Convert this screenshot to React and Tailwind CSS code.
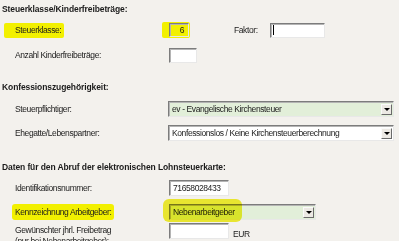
import React from "react";

const font = { fontFamily: '"Liberation Sans", Arial, sans-serif' };

const Sunken = ({ className, children }) => (
  <div
    className={
      "flex items-center border border-t-[#7c7c7c] border-l-[#7c7c7c] border-r-[#e8e8e8] border-b-[#e8e8e8] shadow-[inset_1px_1px_0_#b4b4b4] " +
      className
    }
  >
    {children}
  </div>
);

const Select = ({ className, value }) => (
  <Sunken className={"pl-[3px] pr-[1px] " + className}>
    <span className="flex-1 truncate">{value}</span>
    <span className="flex h-[11px] w-[11px] items-center justify-center border border-t-[#fafafa] border-l-[#fafafa] border-r-[#6a6a6a] border-b-[#6a6a6a] bg-[#ece9e4]">
      <span className="h-0 w-0 border-x-[3px] border-t-[3px] border-x-transparent border-t-black" />
    </span>
  </Sunken>
);

const Heading = ({ children, className }) => (
  <div className={"flex h-[16px] items-center pl-[2px] text-[8.5px] font-bold tracking-[-0.1px] " + className}>
    {children}
  </div>
);

export default function App() {
  return (
    <div
      style={font}
      className="relative h-[241px] w-[399px] overflow-hidden bg-[#f3f1ed] text-[8.5px] tracking-[-0.4px] text-[#1b1b1b]"
    >
      <Heading className="mt-[1px]">Steuerklasse/Kinderfreibeträge:</Heading>

      {/* Steuerklasse + Faktor */}
      <div className="mt-[5px] flex h-[16px] items-center">
        <div className="w-[162px] shrink-0 pl-[4px]">
          <span className="inline-flex h-[15px] items-center rounded-[2px] bg-[#f2f000] pl-[11px] pr-[3px]">
            Steuerklasse:
          </span>
        </div>
        <div className="flex h-[16px] items-center rounded-[2px] bg-[#f2f000] pl-[7px] pr-[1px]">
          <Sunken className="h-[14px] w-[20px] justify-end pr-[4px]">6</Sunken>
        </div>
        <span className="ml-[44px] w-[36px]">Faktor:</span>
        <Sunken className="h-[15px] w-[55px] bg-white pl-[2px]">
          <span className="h-[10px] w-[1px] bg-black" />
        </Sunken>
      </div>

      {/* Anzahl Kinderfreibeträge */}
      <div className="mt-[9px] flex h-[16px] items-center">
        <div className="w-[169px] shrink-0 pl-[15px]">Anzahl Kinderfreibeträge:</div>
        <Sunken className="h-[15px] w-[28px] bg-white" />
      </div>

      <Heading className="mt-[16px]">Konfessionszugehörigkeit:</Heading>

      <div className="mt-[6px] flex h-[16px] items-center">
        <div className="w-[168px] shrink-0 pl-[15px]">Steuerpflichtiger:</div>
        <Select className="h-[16px] w-[226px] bg-[#e2efd9]" value="ev - Evangelische Kirchensteuer" />
      </div>

      <div className="mt-[8px] flex h-[16px] items-center">
        <div className="w-[168px] shrink-0 pl-[15px]">Ehegatte/Lebenspartner:</div>
        <Select className="h-[16px] w-[226px] bg-white" value="Konfessionslos / Keine Kirchensteuerberechnung" />
      </div>

      <Heading className="mt-[18px]">Daten für den Abruf der elektronischen Lohnsteuerkarte:</Heading>

      <div className="mt-[5px] flex h-[16px] items-center">
        <div className="w-[169px] shrink-0 pl-[15px]">Identifikationsnummer:</div>
        <Sunken className="h-[16px] w-[60px] bg-white pl-[3px]">71658028433</Sunken>
      </div>

      <div className="mt-[8px] flex h-[16px] items-center">
        <div className="w-[169px] shrink-0 pl-[12px]">
          <span className="inline-flex h-[16px] items-center rounded-[3px] bg-[#f2f000] pl-[3px] pr-[3px]">
            Kennzeichnung Arbeitgeber:
          </span>
        </div>
        <Select className="h-[16px] w-[147px] bg-[#e2efd9]" value="Nebenarbeitgeber" />
      </div>

      <div className="mt-[3px] flex items-start">
        <div className="w-[169px] shrink-0 pl-[15px] pt-[2px] leading-[11px]">
          Gewünschter jhrl. Freibetrag
          <br />
          (nur bei Nebenarbeitgeber):
        </div>
        <Sunken className="h-[16px] w-[60px] bg-white" />
        <span className="ml-[4px] mt-[5px]">EUR</span>
      </div>

      {/* marker stroke over the employer dropdown */}
      <div className="pointer-events-none absolute left-[163px] top-[199px] h-[23px] w-[79px] rounded-[6px] bg-[#f2f000] opacity-80 mix-blend-multiply" />
    </div>
  );
}
